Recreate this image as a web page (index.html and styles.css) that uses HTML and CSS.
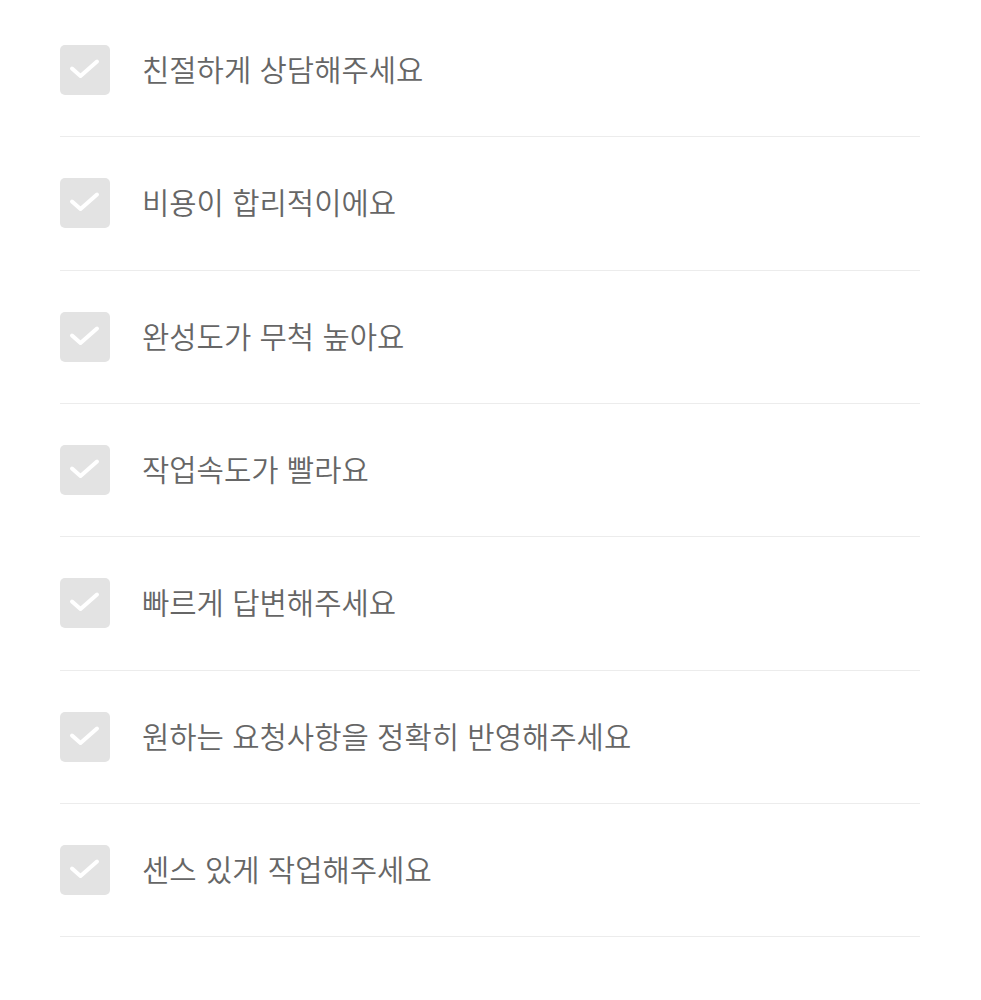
FILE: index.html
```html
<!DOCTYPE html>
<html lang="ko">
<head>
    <meta charset="UTF-8">
    <meta name="viewport" content="width=device-width, initial-scale=1.0">
    <title>리뷰 선택</title>
    <link rel="stylesheet" href="styles.css">
</head>
<body>
    <ul class="review-list">
        <li class="review-item">
            <span class="check-box">
                <svg viewBox="0 0 50 50"><path d="M12 23.5 L20.5 31 L37 16.5"/></svg>
            </span>
            <span class="review-text">친절하게 상담해주세요</span>
        </li>
        <li class="review-item">
            <span class="check-box">
                <svg viewBox="0 0 50 50"><path d="M12 23.5 L20.5 31 L37 16.5"/></svg>
            </span>
            <span class="review-text">비용이 합리적이에요</span>
        </li>
        <li class="review-item">
            <span class="check-box">
                <svg viewBox="0 0 50 50"><path d="M12 23.5 L20.5 31 L37 16.5"/></svg>
            </span>
            <span class="review-text">완성도가 무척 높아요</span>
        </li>
        <li class="review-item">
            <span class="check-box">
                <svg viewBox="0 0 50 50"><path d="M12 23.5 L20.5 31 L37 16.5"/></svg>
            </span>
            <span class="review-text">작업속도가 빨라요</span>
        </li>
        <li class="review-item">
            <span class="check-box">
                <svg viewBox="0 0 50 50"><path d="M12 23.5 L20.5 31 L37 16.5"/></svg>
            </span>
            <span class="review-text">빠르게 답변해주세요</span>
        </li>
        <li class="review-item">
            <span class="check-box">
                <svg viewBox="0 0 50 50"><path d="M12 23.5 L20.5 31 L37 16.5"/></svg>
            </span>
            <span class="review-text">원하는 요청사항을 정확히 반영해주세요</span>
        </li>
        <li class="review-item">
            <span class="check-box">
                <svg viewBox="0 0 50 50"><path d="M12 23.5 L20.5 31 L37 16.5"/></svg>
            </span>
            <span class="review-text">센스 있게 작업해주세요</span>
        </li>
    </ul>
</body>
</html>
```

FILE: styles.css
```css
body {
    font-family: "Noto Sans CJK KR", "Noto Sans", sans-serif;
    background-color: #fff;
    margin: 0;
    padding: 0;
}
.review-list {
    list-style: none;
    margin: 0 61px 0 60px;
    padding: 4px 0 0;
}
.review-item {
    display: flex;
    align-items: center;
    gap: 32px;
    padding: 41px 0 41.33px;
    border-bottom: 1px solid #ececec;
}
.check-box {
    flex: none;
    width: 50px;
    height: 50px;
    border-radius: 5px;
    background-color: #e3e3e3;
}
.check-box svg {
    display: block;
    width: 50px;
    height: 50px;
    fill: none;
    stroke: #fff;
    stroke-width: 4;
    stroke-linecap: round;
    stroke-linejoin: round;
}
.review-text {
    font-size: 29.7px;
    font-weight: 350;
    color: #666;
    line-height: 1;
    margin-top: -2px;
}
```
